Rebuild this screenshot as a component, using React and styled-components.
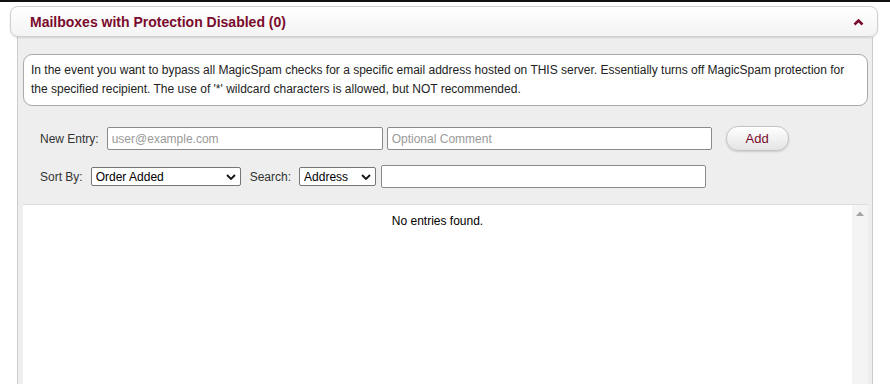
import React from 'react';
import styled, { createGlobalStyle } from 'styled-components';

const Global = createGlobalStyle`
  html, body {
    margin: 0;
    padding: 0;
    background: #fff;
    font-family: "Liberation Sans", Arial, sans-serif;
    overflow: hidden;
  }
`;

const maroon = '#7a0b2c';

const TopRule = styled.div`
  height: 2px;
  background: #111;
`;

const Section = styled.div`
  padding-top: 4px;
`;

const Header = styled.div`
  margin: 0 12px 0 10px;
  height: 29px;
  border: 1px solid #cfcfcf;
  border-radius: 8px;
  background: linear-gradient(#ffffff, #f3f3f3);
  box-shadow: 0 1px 2px rgba(0, 0, 0, 0.12);
  display: flex;
  align-items: center;
  justify-content: space-between;
  padding: 0 13px 0 19px;
  position: relative;
  z-index: 1;
`;

const Title = styled.h3`
  margin: 0;
  font-size: 14px;
  font-weight: bold;
  color: ${maroon};
`;

const Panel = styled.div`
  box-sizing: border-box;
  margin: 0 17px;
  border-left: 1px solid #cccccc;
  border-right: 1px solid #cccccc;
  background: #eeeeee;
  padding: 17px 4px 0 5px;
  height: 347px;
  display: flex;
  flex-direction: column;
`;

const Info = styled.div`
  background: #fff;
  border: 1px solid #a9a9a9;
  border-radius: 9px;
  padding: 6px 7px;
  font-size: 12px;
  line-height: 19px;
  color: #222;
`;

const Row = styled.div`
  display: flex;
  align-items: center;
  padding-left: 17px;
  margin-top: ${p => p.$top}px;
`;

const Label = styled.span`
  font-size: 12px;
  color: #333;
  margin-right: ${p => p.$gap}px;
`;

const TextInput = styled.input`
  box-sizing: border-box;
  width: ${p => p.$w}px;
  height: 23px;
  border: 1px solid #8a8a8a;
  border-radius: 2px;
  padding: 0 4px;
  font-family: "Liberation Sans", Arial, sans-serif;
  font-size: 12px;
  color: #000;
  margin-right: ${p => p.$gap || 0}px;
  background: #fff;
  &::placeholder { color: #9a9a9a; }
`;

const SelectBox = styled.div`
  box-sizing: border-box;
  width: ${p => p.$w}px;
  height: 19px;
  border: 1px solid #767676;
  border-radius: 2px;
  background: #fff;
  display: flex;
  align-items: center;
  justify-content: space-between;
  padding: 0 4px 0 4px;
  font-size: 12px;
  color: #000;
  margin-right: ${p => p.$gap || 0}px;
`;

const AddButton = styled.button`
  width: 63px;
  height: 25px;
  border: 1px solid #c3c3c3;
  border-radius: 12px;
  background: linear-gradient(#ffffff, #e4e4e4);
  box-shadow: 0 1px 2px rgba(0, 0, 0, 0.15);
  color: ${maroon};
  font-family: "Liberation Sans", Arial, sans-serif;
  font-size: 13px;
  padding: 0;
`;

const List = styled.div`
  margin-top: 16px;
  display: flex;
  flex: 1;
  background: #fff;
  border-top: 1px solid #dddddd;
`;

const ListBody = styled.div`
  flex: 1;
  text-align: center;
  font-size: 12px;
  color: #000;
  padding-top: 9px;
`;

const Scrollbar = styled.div`
  width: 16px;
  background: #f4f4f4;
  display: flex;
  justify-content: center;
  padding-top: 6px;
  box-sizing: border-box;
`;

const Chevron = () => (
  <svg width="11" height="8" viewBox="0 0 11 8">
    <polyline points="1.5,6.5 5.5,2.5 9.5,6.5" fill="none" stroke={maroon} strokeWidth="2.6" />
  </svg>
);

const Caret = () => (
  <svg width="10" height="6" viewBox="0 0 10 6">
    <polyline points="1,1 5,5 9,1" fill="none" stroke="#111" strokeWidth="1.8" />
  </svg>
);

const UpArrow = () => (
  <svg width="8" height="5" viewBox="0 0 8 5">
    <polygon points="0,5 4,0.5 8,5" fill="#a3a3a3" />
  </svg>
);

export default function App() {
  return (
    <>
      <Global />
      <TopRule />
      <Section>
        <Header>
          <Title>Mailboxes with Protection Disabled (0)</Title>
          <Chevron />
        </Header>
        <Panel>
          <Info>
            In the event you want to bypass all MagicSpam checks for a specific email address hosted on THIS server. Essentially turns off MagicSpam protection for the specified recipient. The use of '*' wildcard characters is allowed, but NOT recommended.
          </Info>
          <Row $top={20}>
            <Label $gap={8}>New Entry:</Label>
            <TextInput $w={276} $gap={4} placeholder="user@example.com" />
            <TextInput $w={325} $gap={14} placeholder="Optional Comment" />
            <AddButton>Add</AddButton>
          </Row>
          <Row $top={14}>
            <Label $gap={8}>Sort By:</Label>
            <SelectBox $w={150} $gap={9}>Order Added<Caret /></SelectBox>
            <Label $gap={8}>Search:</Label>
            <SelectBox $w={77} $gap={5}>Address<Caret /></SelectBox>
            <TextInput $w={325} />
          </Row>
          <List>
            <ListBody>No entries found.</ListBody>
            <Scrollbar><UpArrow /></Scrollbar>
          </List>
        </Panel>
      </Section>
    </>
  );
}
